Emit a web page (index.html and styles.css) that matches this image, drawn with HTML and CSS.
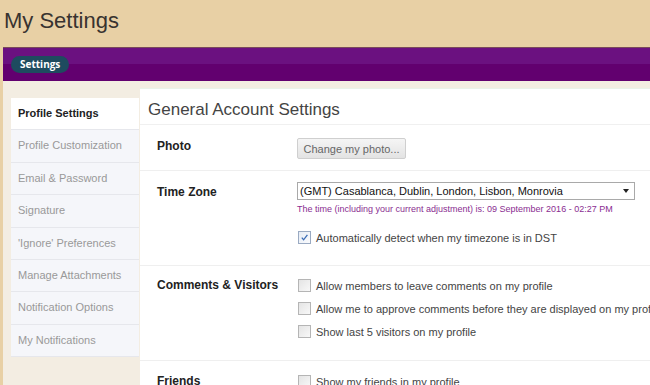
FILE: index.html
```html
<!DOCTYPE html>
<html lang="en">
<head>
    <meta charset="UTF-8">
    <title>My Settings</title>
    <link rel="stylesheet" href="styles.css">
</head>
<body>
    <h1 class="page-title">My Settings</h1>
    <div class="page">
        <div class="tabbar">
            <span class="tab">Settings</span>
        </div>
        <div class="content">
            <ul class="sidenav">
                <li class="active">Profile Settings</li>
                <li>Profile Customization</li>
                <li>Email &amp; Password</li>
                <li>Signature</li>
                <li>'Ignore' Preferences</li>
                <li>Manage Attachments</li>
                <li>Notification Options</li>
                <li>My Notifications</li>
            </ul>
            <div class="panel">
                <h2 class="panel-title">General Account Settings</h2>

                <div class="row row-photo">
                    <div class="label">Photo</div>
                    <div class="controls">
                        <button class="btn">Change my photo...</button>
                    </div>
                </div>

                <div class="row row-zone">
                    <div class="label">Time Zone</div>
                    <div class="controls">
                        <div class="select">
                            <span>(GMT) Casablanca, Dublin, London, Lisbon, Monrovia</span>
                            <span class="arrow"></span>
                        </div>
                        <p class="note">The time (including your current adjustment) is: 09 September 2016 - 02:27 PM</p>
                        <label class="check gap"><span class="box checked"><svg width="9" height="9" viewBox="0 0 9 9"><path d="M1.8 4.6 L3.6 6.8 L7.4 1.8" fill="none" stroke="#3a6cb5" stroke-width="1.3"/></svg></span>Automatically detect when my timezone is in DST</label>
                    </div>
                </div>

                <div class="row row-comments">
                    <div class="label">Comments &amp; Visitors</div>
                    <div class="controls">
                        <label class="check"><span class="box"></span>Allow members to leave comments on my profile</label>
                        <label class="check"><span class="box"></span>Allow me to approve comments before they are displayed on my profile</label>
                        <label class="check"><span class="box"></span>Show last 5 visitors on my profile</label>
                    </div>
                </div>

                <div class="row row-friends">
                    <div class="label">Friends</div>
                    <div class="controls">
                        <label class="check"><span class="box"></span>Show my friends in my profile</label>
                    </div>
                </div>
            </div>
        </div>
    </div>
</body>
</html>
```

FILE: styles.css
```css
body{
    margin:0;
    padding:0;
    background:#e8d0a5;
    font-family:"Liberation Sans", Arial, sans-serif;
    overflow:hidden;
    height:385px;
}
.page-title{
    margin:0;
    height:26px;
    padding:8px 0 13px 4px;
    font-size:22px;
    line-height:26px;
    font-weight:normal;
    color:#383330;
}
.page{
    margin-left:3px;
    width:720px;
    background:#f3ede2;
    height:338px;
    overflow:hidden;
}
.tabbar{
    height:33px;
    border-top:1px solid #7a4a5a;
    background:linear-gradient(#6b1180 0, #6b1180 50%, #62006f 50%, #62006f 100%);
    display:flex;
    align-items:center;
    padding-left:8px;
}
.tab{
    background:#1e4b5f;
    color:#fff;
    font-family:"Open Sans", sans-serif;
    font-weight:bold;
    font-size:10px;
    line-height:17px;
    height:17px;
    padding:0 9px;
    border-radius:9px;
}
.content{
    display:flex;
    align-items:flex-start;
}
.sidenav{
    list-style:none;
    margin:17px 0 0 8px;
    padding:0;
    width:128px;
    flex:none;
}
.sidenav li{
    background:#f5f6fa;
    color:#999;
    font-size:11px;
    line-height:31.4px;
    padding-left:7px;
    border-bottom:1px solid #e6e7ec;
    white-space:nowrap;
}
.sidenav li.active{
    background:#fff;
    color:#222;
    font-weight:bold;
}
.panel{
    margin:7px 0 0 1px;
    border-top:1px solid #eaf3ea;
    background:#fff;
    flex:1;
    height:320px;
}
.panel-title{
    margin:0;
    padding:11px 0 4px 8px;
    font-size:17px;
    line-height:20px;
    font-weight:normal;
    color:#444;
    border-bottom:1px solid #f0f0f0;
}
.row{
    display:flex;
    padding:10px 0 0 17px;
    border-bottom:1px solid #efefef;
}
.row-photo{ padding-bottom:11px; }
.row-zone{ padding-bottom:16px; }
.row-comments{ padding-top:8px; padding-bottom:17px; }
.row-friends{ padding-top:9px; border-bottom:0; }
.label{
    width:140px;
    flex:none;
    font-size:12px;
    font-weight:bold;
    line-height:23px;
    color:#222;
}
.controls{
    white-space:nowrap;
}
.btn{
    margin-top:3px;
    height:21px;
    width:109px;
    padding:0;
    font-family:"Liberation Sans", Arial, sans-serif;
    font-size:11px;
    color:#666;
    background:linear-gradient(#f5f5f5, #e3e3e3);
    border:1px solid #cfcfcf;
    border-radius:2px;
}
.select{
    margin-top:1px;
    width:334px;
    height:16px;
    border:1px solid #a9a9a9;
    display:flex;
    align-items:center;
    justify-content:space-between;
    padding-left:2px;
    font-size:11px;
    color:#111;
}
.arrow{
    width:0;
    height:0;
    border-left:3px solid transparent;
    border-right:3px solid transparent;
    border-top:4px solid #222;
    margin-right:5px;
}
.note{
    margin:2px 0 0;
    font-size:9px;
    line-height:14px;
    color:#8a2d91;
}
.check{
    display:flex;
    align-items:center;
    height:23px;
    font-size:11px;
    color:#444;
}
.check.gap{ margin-top:10px; }
.box{
    width:11px;
    height:11px;
    margin:0 5px 0 1px;
    border:1px solid #b5b5b5;
    background:linear-gradient(135deg, #e4e4e4, #f8f8f8);
    display:flex;
    align-items:center;
    justify-content:center;
}
.box.checked{
    border-color:#9aaac2;
    background:linear-gradient(135deg, #e6ecf5, #fafbfd);
}
```
